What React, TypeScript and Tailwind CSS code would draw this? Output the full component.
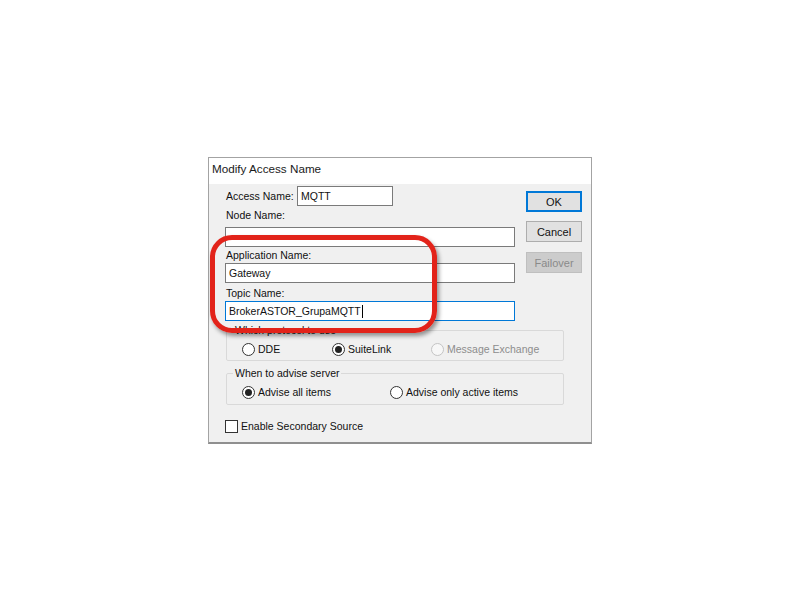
import React from "react";

const Radio = ({ checked, disabled, label, width }: { checked?: boolean; disabled?: boolean; label: string; width?: string }) => (
  <div className={`flex items-center h-[14px] ${width ?? ""}`}>
    <span
      className={`w-[13px] h-[13px] rounded-full border flex items-center justify-center ${
        disabled ? "border-[#c4c4c4] bg-[#f7f7f7]" : "border-[#333] bg-white"
      }`}
    >
      {checked && <span className="w-[7px] h-[7px] rounded-full bg-[#222]" />}
    </span>
    <span className={`ml-[3px] ${disabled ? "text-[#8d8d8d]" : "text-[#111]"}`}>{label}</span>
  </div>
);

export default function App() {
  return (
    <div
      className="relative w-[800px] h-[600px] bg-white text-[10.5px] leading-[14px] text-[#111]"
      style={{ fontFamily: '"Liberation Sans", Arial, sans-serif' }}
    >
      <div className="absolute left-0 top-0 w-full">
        <div className="ml-[208px] mt-[157px] w-[384px] h-[287px] border border-[#a3a3a3] border-b-[2px] border-b-[#8f8f8f] bg-[#f0f0f0] flex flex-col">
          <div className="h-[26px] bg-white pl-[3px] pt-[4px] text-[11.7px] leading-[14px] text-[#1a1a1a]">
            Modify Access Name
          </div>
          <div className="flex flex-1">
            <div className="w-[317px] pl-[16px] flex flex-col">
              <div className="mt-[2px] flex items-center h-[20px]">
                <span className="ml-[1px] w-[71px]">Access Name:</span>
                <div className="w-[96px] h-[20px] border border-[#7a7a7a] bg-white pl-[3px] flex items-center">MQTT</div>
              </div>
              <div className="mt-[2px] pl-[1px]">Node Name:</div>
              <div className="mt-[5px] w-[290px] h-[20px] border border-[#7a7a7a] bg-white" />
              <div className="mt-[1px] pl-[1px]">Application Name:</div>
              <div className="mt-[1px] w-[290px] h-[20px] border border-[#7a7a7a] bg-white pl-[3px] flex items-center">
                Gateway
              </div>
              <div className="mt-[3px] pl-[1px]">Topic Name:</div>
              <div className="mt-[1px] w-[290px] h-[20px] border border-[#0078d7] bg-white pl-[3px] flex items-center">
                BrokerASTOR_GrupaMQTT
                <span className="w-[1px] h-[13px] bg-black ml-[1px]" />
              </div>
              <fieldset className="mt-[2px] ml-[1px] w-[338px] h-[38px] border border-[#d9d9d9] rounded-[2px]">
                <legend className="ml-[6px] px-[2px] leading-[14px]">Which protocol to use</legend>
                <div className="mt-[5px] pl-[15px] flex">
                  <Radio label="DDE" width="w-[90px]" />
                  <Radio label="SuiteLink" checked width="w-[99px]" />
                  <Radio label="Message Exchange" disabled />
                </div>
              </fieldset>
              <fieldset className="mt-[5px] ml-[1px] w-[338px] h-[39px] border border-[#d9d9d9] rounded-[2px]">
                <legend className="ml-[6px] px-[2px] leading-[14px]">When to advise server</legend>
                <div className="mt-[5px] pl-[15px] flex">
                  <Radio label="Advise all items" checked width="w-[148px]" />
                  <Radio label="Advise only active items" />
                </div>
              </fieldset>
              <div className="mt-[14px] flex items-center h-[14px]">
                <span className="w-[13px] h-[13px] border border-[#333] bg-white" />
                <span className="ml-[3px]">Enable Secondary Source</span>
              </div>
            </div>
            <div className="pt-[7px] flex flex-col text-[11px]">
              <div className="w-[56px] h-[21px] border-2 border-[#0078d7] bg-[#e1e1e1] flex items-center justify-center">OK</div>
              <div className="mt-[9px] w-[56px] h-[21px] border border-[#adadad] bg-[#e1e1e1] flex items-center justify-center">
                Cancel
              </div>
              <div className="mt-[10px] w-[56px] h-[21px] border border-[#bfbfbf] bg-[#cccccc] text-[#8a8a8a] flex items-center justify-center">
                Failover
              </div>
            </div>
          </div>
        </div>
      </div>
      <div className="absolute left-[210px] top-[235px] w-[227px] h-[98px] border-[5px] border-[#e2231a] rounded-[22px] shadow-[2px_3px_4px_rgba(0,0,0,0.4)]" />
    </div>
  );
}
